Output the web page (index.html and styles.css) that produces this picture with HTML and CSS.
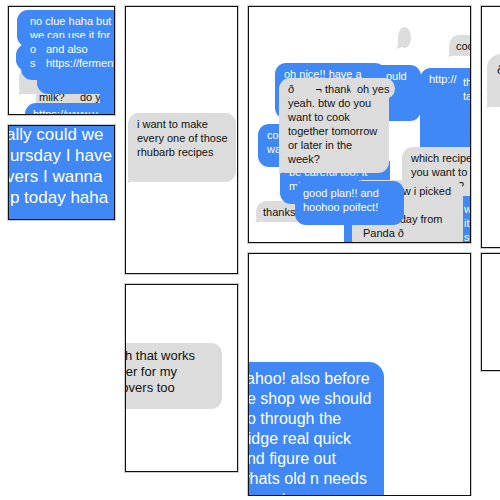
FILE: index.html
```html
<!DOCTYPE html>
<html lang="en">
<head>
<meta charset="utf-8">
<title>Message collage</title>
<link rel="stylesheet" href="styles.css">
</head>
<body>
<main class="collage">
  <section class="column">
    <div class="frame frame-ferment">
      <p class="bubble gray tail fer-base"></p>
      <p class="bubble gray fer-milk square">milk?</p>
      <p class="bubble gray fer-do square">do y</p>
      <p class="bubble blue fer-right"></p>
      <p class="bubble blue fer-www">https://www.y</p>
      <p class="bubble blue fer-clue">no clue haha but<br>we can use it for</p>
      <p class="bubble blue fer-bump"></p>
      <p class="bubble blue fer-or">o<br>s</p>
      <p class="bubble blue fer-also">and also<br>https://ferment</p>
    </div>
    <div class="frame frame-thursday">
      <p class="bubble blue thursday">really could we<br>    ursday I have<br>rovers I wanna<br>    p today haha</p>
    </div>
  </section>

  <section class="column">
    <div class="frame frame-rhubarb">
      <p class="bubble gray tail rhubarb">i want to make<br>every one of those<br>rhubarb recipes</p>
    </div>
    <div class="frame frame-works">
      <p class="bubble gray works">yeah that works<br>better for my<br>leftovers too</p>
    </div>
  </section>

  <section class="column">
    <div class="frame frame-pile">
      <p class="bubble gray tail empty"></p>
      <p class="bubble gray tail short cooool">coool</p>
      <p class="bubble blue would">would</p>
      <p class="bubble blue nice">oh nice!! have a</p>
      <p class="bubble blue link">http://</p>
      <p class="bubble blue that">that<br>talk</p>
      <p class="bubble blue cool">cool<br>want</p>
      <p class="bubble gray tail short thanks">thanks</p>
      <p class="bubble blue careful">be careful too! it<br>mi</p>
      <p class="bubble blue sliver"></p>
      <p class="bubble blue will">we<br>it<br>so</p>
      <p class="bubble gray recipe">which recipe<br>you want to<br>cook next?</p>
      <p class="bubble gray picked">             w i picked<br><br>            day from<br>Panda ð</p>
      <p class="bubble blue plan">good plan!! and<br>hoohoo poifect!</p>
      <p class="bubble gray tail cook">ð       ¬ thank<br>yeah. btw do you<br>want to cook<br>together tomorrow<br>or later in the<br>week?</p>
      <p class="bubble gray short yes">oh yes</p>
    </div>
    <div class="frame frame-yahoo">
      <p class="bubble blue yahoo">yahoo! also before<br>  e shop we should<br>go through the<br>fridge real quick<br>and figure out<br>whats old n needs<br>some to</p>
    </div>
  </section>

  <section class="column column-edge">
    <div class="frame frame-eth">
      <p class="bubble gray tail eth">ð</p>
    </div>
    <div class="frame frame-blank"></div>
  </section>
</main>
</body>
</html>
```
FILE: styles.css
```css
* { box-sizing: border-box; }

body {
  margin: 0;
  overflow: hidden;
  background: #fff;
  color: #111;
  font: 11px/14px "Liberation Sans", Arial, sans-serif;
}

.collage {
  display: grid;
  grid-template-columns: 107fr 113fr 223fr 19fr;
  column-gap: 10px;
  align-items: start;
  padding: 6px 0 0 8px;
  overflow: hidden;
}

.column {
  display: flex;
  flex-direction: column;
  gap: 10px;
  min-width: 0;
}

.column-edge { gap: 5px; }
.column-edge .frame { margin-right: -90px; }

.frame {
  position: relative;
  overflow: hidden;
  border: 1px solid #111;
  box-shadow: 0 0 0 1px rgba(0, 0, 0, 0.2);
}

.frame-ferment { min-height: 109px; }
.frame-thursday { min-height: 95px; }
.frame-rhubarb { min-height: 268px; }
.frame-works { min-height: 188px; }
.frame-pile { min-height: 237px; }
.frame-yahoo { min-height: 243px; }
.frame-eth { min-height: 242px; }
.frame-blank { min-height: 118px; }

/* Messages are scattered freely inside each frame. */
.bubble {
  position: absolute;
  isolation: isolate;
  margin: 0;
  padding: 4px 9px;
  border-radius: 11px;
  white-space: pre;
}

.blue { background: #4088f6; color: #fff; }
.gray { background: #dcdcdc; }
.short { padding: 4px 7px; }
.square { border-radius: 0; }

.tail::before {
  content: "";
  position: absolute;
  z-index: -1;
  left: -1px;
  bottom: -1px;
  width: 12px;
  height: 12px;
  background: #dcdcdc;
  clip-path: path("M1 0 H12 V11 L8 11 Q5 10 0 12 Q2 9 1 4 Z");
}

.fer-base { left: 10px; top: 60px; width: 60px; height: 27px; }
.fer-milk { left: 27px; top: 79px; width: 70px; height: 30px; padding-left: 3px; }
.fer-do { left: 62px; top: 79px; width: 40px; height: 30px; }
.fer-right { left: 91px; top: 60px; width: 60px; height: 60px; border-radius: 0; }
.fer-www { left: 16px; top: 96px; width: 120px; height: 40px; padding-left: 8px; }
.fer-clue { left: 8px; top: 3px; width: 130px; height: 37px; padding-left: 13px; }
.fer-bump { left: 7px; top: 37px; width: 40px; height: 27px; }
.fer-or { left: 12px; top: 31px; width: 60px; height: 42px; }
.fer-also { left: 28px; top: 31px; width: 120px; height: 56px; }

.thursday {
  left: -27px;
  top: -12px;
  width: 160px;
  height: 120px;
  padding: 10px 9px;
  font-size: 17px;
  line-height: 21px;
}

.rhubarb { left: 2px; top: 106px; width: 108px; height: 69px; }

.works {
  left: -33px;
  top: 58px;
  width: 129px;
  height: 66px;
  padding: 5px 11px;
  font-size: 13px;
  line-height: 16px;
}

.empty { left: 149px; top: 20px; width: 13px; height: 21px; padding: 0; border-radius: 50%; }
.empty::before { left: -2px; width: 9px; height: 11px; clip-path: path("M2 0 H9 V7 Q5 10 0 11 Q3 8 2 2 Z"); }
.cooool { left: 200px; top: 28px; width: 50px; height: 21px; }
.nice { left: 26px; top: 56px; width: 111px; height: 56px; }
.would { left: 60px; top: 58px; width: 112px; height: 56px; padding-left: 69px; }
.link { left: 171px; top: 61px; width: 70px; height: 79px; border-bottom-left-radius: 0; }
.that { left: 208px; top: 64px; width: 50px; height: 60px; padding-left: 6px; }
.cool { left: 9px; top: 117px; width: 60px; height: 43px; }
.thanks { left: 7px; top: 194px; width: 60px; height: 21px; }
.careful { left: 31px; top: 154px; width: 110px; height: 43px; border-top-right-radius: 0; }
.sliver { left: 95px; top: 200px; width: 30px; height: 50px; border-radius: 0; }
.will { left: 206px; top: 189px; width: 40px; height: 60px; padding: 6px 9px; border-radius: 0; }
.recipe { left: 153px; top: 140px; width: 110px; height: 49px; border-radius: 11px 0 0 0; }
.picked { left: 103px; top: 173px; width: 111px; height: 70px; padding-left: 11px; }
.plan { left: 46px; top: 174px; width: 109px; height: 44px; padding: 5px 8px; }
.cook { left: 30px; top: 71px; width: 110px; height: 95px; }
.yes { left: 101px; top: 71px; width: 45px; height: 21px; }

.yahoo {
  left: -31px;
  top: 108px;
  width: 166px;
  height: 200px;
  padding: 7px 20px;
  border-radius: 15px;
  font-size: 16px;
  line-height: 20px;
}

.eth {
  left: 5px;
  top: 47px;
  width: 100px;
  height: 53px;
  padding: 8px 10px;
  border-radius: 14px;
  font-size: 13px;
  line-height: 16px;
}
```
